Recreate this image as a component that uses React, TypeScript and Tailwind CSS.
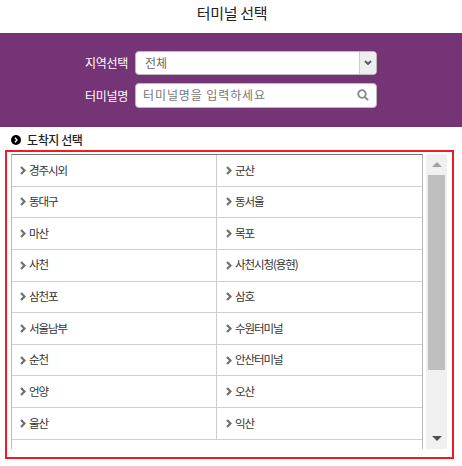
const terminals = [
  ["경주시외", "군산"],
  ["동대구", "동서울"],
  ["마산", "목포"],
  ["사천", "사천시청(용현)"],
  ["삼천포", "삼호"],
  ["서울남부", "수원터미널"],
  ["순천", "안산터미널"],
  ["언양", "오산"],
  ["울산", "익산"],
];

const font = "font-['Noto_Sans_CJK_KR','Noto_Sans',sans-serif]";

function Chevron() {
  return (
    <svg className="w-[6px] h-[9px] shrink-0" viewBox="0 0 6 9" fill="none" stroke="#707070" strokeWidth={2.2}>
      <path d="M1 1l3.5 3.5L1 8" />
    </svg>
  );
}

function Row({ left, right }: { left: string; right: string }) {
  return (
    <div className="h-[31.65px] flex border-b border-[#d0d0d0]">
      <div className="w-[205px] flex items-center gap-[3px] pl-[8px] border-r border-[#ccc]">
        <Chevron />
        <span className="text-[11.5px] text-[#333] leading-none tracking-[-1.1px]">{left}</span>
      </div>
      <div className="flex-1 flex items-center gap-[3px] pl-[9px]">
        <Chevron />
        <span className="text-[11.5px] text-[#333] leading-none tracking-[-1.1px]">{right}</span>
      </div>
    </div>
  );
}

export default function App() {
  return (
    <div className={`w-[462px] h-[466px] bg-white overflow-hidden ${font}`}>
      <h1 className="h-[33px] flex items-center justify-center text-[15px] text-[#222] font-normal pb-[7px] pl-[2px] tracking-[-0.3px]">터미널 선택</h1>

      <div className="h-[94px] bg-[#753476] flex flex-col gap-[8px] pt-[18px] pl-[85px]">
        <div className="flex items-center gap-[7px]">
          <label className="w-[43px] text-[12px] text-white whitespace-nowrap tracking-[-0.3px]">지역선택</label>
          <div className="w-[242px] h-[24px] bg-white rounded-[4px] border border-[#bbb] flex items-center">
            <span className="flex-1 pl-[9px] text-[12px] text-[#666]">전체</span>
            <div className="w-[17px] h-full bg-[#eee] border-l border-[#ccc] rounded-r-[3px] flex items-center justify-center">
              <svg className="w-[8px] h-[6px]" viewBox="0 0 8 6" fill="none" stroke="#555" strokeWidth={1.8}>
                <path d="M1 1l3 3 3-3" />
              </svg>
            </div>
          </div>
        </div>
        <div className="flex items-center gap-[7px]">
          <label className="w-[43px] text-[12px] text-white whitespace-nowrap tracking-[-0.3px]">터미널명</label>
          <div className="w-[242px] h-[25px] bg-white rounded-[4px] border border-[#bbb] flex items-center justify-between pl-[7px] pr-[7px] pb-[1px]">
            <span className="text-[12px] text-[#777] tracking-[0.9px]">터미널명을 입력하세요</span>
            <svg className="w-[12px] h-[12px]" viewBox="0 0 12 12" fill="none" stroke="#888" strokeWidth={1.8}>
              <circle cx="5" cy="5" r="3.8" />
              <path d="M8 8l3.2 3.2" />
            </svg>
          </div>
        </div>
      </div>

      <div className="h-[23px] flex items-center gap-[6px] pl-[11px] pt-[2px]">
        <span className="w-[10px] h-[10px] rounded-full bg-black flex items-center justify-center">
          <svg className="w-[4px] h-[6px]" viewBox="0 0 4 6" fill="none" stroke="#fff" strokeWidth={1.3}>
            <path d="M1 .7L3 3 1 5.3" />
          </svg>
        </span>
        <span className="text-[12px] text-[#222] tracking-[-0.4px] font-medium">도착지 선택</span>
      </div>

      <div className="w-[449px] h-[309px] ml-[5px] border-2 border-[#ed1c24] pt-[2px] pl-[4px] flex gap-[3px]">
        <div className="w-[412px] h-[295px] border-l border-r border-t border-l-[#bbb] border-r-[#bbb] border-t-[#777] overflow-hidden">
          {terminals.map(([a, b]) => (
            <Row key={a} left={a} right={b} />
          ))}
        </div>
        <div className="w-[21px] h-[295px] bg-[#f0f0f0] flex flex-col items-center">
          <div className="h-[21px] flex items-center justify-center">
            <div className="w-0 h-0 border-x-[5px] border-x-transparent border-b-[5px] border-b-[#a3a3a3]" />
          </div>
          <div className="w-[17px] h-[195px] bg-[#bebebe]" />
          <div className="flex-1" />
          <div className="h-[21px] flex items-center justify-center">
            <div className="w-0 h-0 border-x-[5px] border-x-transparent border-t-[5px] border-t-[#505050]" />
          </div>
        </div>
      </div>
    </div>
  );
}
